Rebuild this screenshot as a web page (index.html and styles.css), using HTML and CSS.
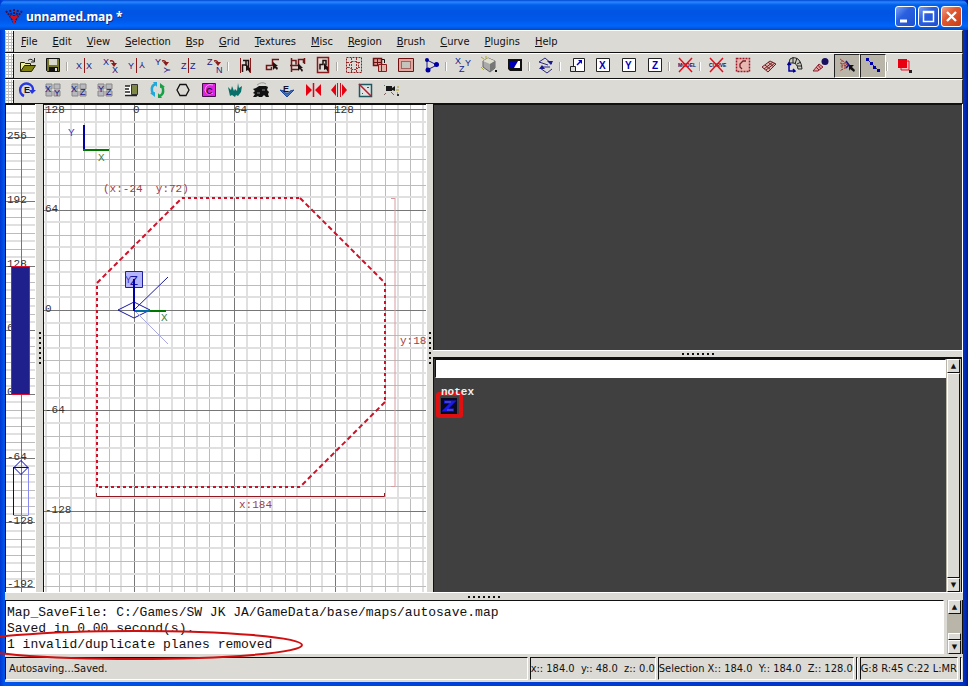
FILE: index.html
```html
<!DOCTYPE html>
<html lang="en">
<head>
<meta charset="utf-8">
<title>unnamed.map *</title>
<link rel="stylesheet" href="styles.css">
</head>
<body>
<div class="window">
  <header class="titlebar">
    <svg class="app-icon" width="18" height="18" viewBox="0 0 18 18"><path d="M1 3l4 5 4 7 4-7 4-5M5 2l2 6M13 2l-2 6M9 1v13" fill="none" stroke="#401040" stroke-width="2" stroke-dasharray="2 1"/><path d="M5 8h8l-3 4v4H8v-4z" fill="#d01020"/></svg>
    <h1>unnamed.map *</h1>
    <div class="window-buttons">
      <button aria-label="Minimize"><svg width="19" height="19"><path d="M4 14h7" stroke="#fff" stroke-width="3"/></svg></button>
      <button aria-label="Maximize"><svg width="19" height="19"><path d="M4.500 14.500v-10h10v10zM4 5.500h11" fill="none" stroke="#fff" stroke-width="1.500"/></svg></button>
      <button class="close" aria-label="Close"><svg width="19" height="19"><path d="M5 5l9 9M14 5l-9 9" stroke="#fff" stroke-width="2.300"/></svg></button>
    </div>
  </header>

  <nav class="bar menubar">
    <span class="grip"></span>
    <button><u>F</u>ile</button><button><u>E</u>dit</button><button><u>V</u>iew</button><button><u>S</u>election</button><button><u>B</u>sp</button><button><u>G</u>rid</button><button><u>T</u>extures</button><button><u>M</u>isc</button><button><u>R</u>egion</button><button><u>B</u>rush</button><button><u>C</u>urve</button><button><u>P</u>lugins</button><button><u>H</u>elp</button>
  </nav>

  <div class="bar toolbar">
    <span class="grip"></span>
    <button aria-label="Open"><svg viewBox="0 0 24 24"><path d="M5.500 18V9.500h4l1 1h5V13" fill="#f0f090" stroke="#222200"/><path d="M5.500 18.500l4-6h11l-4 6z" fill="#808010" stroke="#222200"/><path d="M13 7.500q3-3 6 1M19.500 5v4H16" fill="none" stroke="#222"/></svg></button>
    <button aria-label="Save"><svg viewBox="0 0 24 24"><path d="M5.500 5.500h13v13h-12l-1-1z" fill="#77772a" stroke="#111"/><path d="M8 6h8v6H8z" fill="#d8d8cc"/><path d="M8 14h9v4H8z" fill="#111"/><path d="M14 15h2v3h-2z" fill="#ddd"/></svg></button>
    <i class="sep"></i>
    <button aria-label="Flip X"><svg viewBox="0 0 24 24"><text x="4" y="16" class="ax">X</text><path d="M12.500 5v15" stroke="#8b1a1a"/><text x="14" y="16" class="ax">X</text></svg></button>
    <button aria-label="Rotate X"><svg viewBox="0 0 24 24"><text x="5" y="12" class="ax">X</text><text x="14" y="20" class="ax">X</text><path d="M12 8q4-1 4 3" fill="none" stroke="#8b1a1a" stroke-width="1.500"/><path d="M13 10h6l-3 4z" fill="#8b1a1a"/></svg></button>
    <button aria-label="Flip Y"><svg viewBox="0 0 24 24"><text x="4" y="16" class="ax">Y</text><path d="M12.500 5v15" stroke="#8b1a1a"/><text x="-21" y="-9" class="ax" transform="rotate(180)">Y</text></svg></button>
    <button aria-label="Rotate Y"><svg viewBox="0 0 24 24"><text x="5" y="12" class="ax">Y</text><text x="-20" y="20" class="ax" transform="rotate(-90)">Y</text><path d="M12 8q4-1 4 3" fill="none" stroke="#8b1a1a" stroke-width="1.500"/><path d="M13 9h6l-3 4z" fill="#8b1a1a"/></svg></button>
    <button aria-label="Flip Z"><svg viewBox="0 0 24 24"><text x="5" y="16" class="ax">Z</text><path d="M12.500 5v15" stroke="#8b1a1a"/><text x="14" y="16" class="ax">Z</text></svg></button>
    <button aria-label="Rotate Z"><svg viewBox="0 0 24 24"><text x="5" y="12" class="ax">Z</text><text x="14" y="20" class="ax">N</text><path d="M12 8q4-1 4 3" fill="none" stroke="#8b1a1a" stroke-width="1.500"/><path d="M13 9h6l-3 4z" fill="#8b1a1a"/></svg></button>
    <i class="sep"></i>
    <button aria-label="Complete tall"><svg viewBox="0 0 24 24"><path d="M7.500 5v15M17.500 5v15" stroke="#8b1a1a"/><path d="M9.500 19v-7h4M10 7.500h5.500V14M13 8v5" fill="none" stroke="#201010" stroke-width="1.500"/><path d="M13 11v7l2-1 2 3v-5z" fill="#201010"/></svg></button>
    <button aria-label="Select touching"><svg viewBox="0 0 24 24"><path d="M20 6.500h-6.500v6H7.500v4h5V14" fill="none" stroke="#701818" stroke-width="1.500"/><path d="M14 9v8l2-2 2 2 1-2-2-2h2z" fill="#201010"/></svg></button>
    <button aria-label="Select partial tall"><svg viewBox="0 0 24 24"><path d="M6.500 5v14M19.500 5v6M5 12.500h8M7 7.500h4v4M13.500 12V6.500h5V10M7 16.500h6" fill="none" stroke="#701818" stroke-width="1.500"/><path d="M13 10v8l2-2 2 3 1-2-2-2h2z" fill="#201010"/></svg></button>
    <button aria-label="Select inside"><svg viewBox="0 0 24 24"><path d="M6.500 4.500h11v15h-11z" fill="none" stroke="#8b1a1a" stroke-width="1.500"/><path d="M9 16.500v-5h3v-4h3V12" fill="none" stroke="#201010" stroke-width="1.500"/><path d="M13 10v7l2-1 2 3v-5z" fill="#201010"/></svg></button>
    <i class="sep"></i>
    <button aria-label="CSG subtract"><svg viewBox="0 0 24 24"><path d="M4.500 4.500h15v15h-15z" fill="none" stroke="#8b1a1a" stroke-dasharray="2 1"/><path d="M9.500 8.500h5l2 2v4l-2 2h-5l-2-2v-4zM9.500 5v14M14.500 5v14M5 9.500h3M16 9.500h3M5 14.500h3M16 14.500h3" fill="none" stroke="#9b3030" stroke-dasharray="2 1"/></svg></button>
    <button aria-label="CSG merge"><svg viewBox="0 0 24 24"><path d="M5.500 5.500h8v7h-8z" fill="#d89a90" stroke="#701010" stroke-width="1.500"/><path d="M6 9.500h7M9.500 6v6" fill="none" stroke="#701010"/><path d="M14 6.500h2.500V10" fill="none" stroke="#111"/><path d="M10.500 11.500h8v7h-8z" fill="#dcb4ac" stroke="#8b1a1a"/><path d="M13.500 12v6" stroke="#8b1a1a"/></svg></button>
    <button aria-label="Hollow"><svg viewBox="0 0 24 24"><path d="M4.500 5.500h15v13h-15z" fill="#e0a8a0" stroke="#701010"/><path d="M7.500 8.500h9v7h-9z" fill="#c4c4bc" stroke="#701010" stroke-dasharray="1 1"/></svg></button>
    <button aria-label="Clipper"><svg viewBox="0 0 24 24"><path d="M7 7v10l10-5-10-5" fill="none" stroke="#1a1a90"/><circle cx="7" cy="7" r="2" fill="#0000a0"/><circle cx="8" cy="17" r="2.500" fill="#0000a0"/><circle cx="16.500" cy="11.500" r="2.500" fill="#0000a0"/></svg></button>
    <i class="sep"></i>
    <button aria-label="Change views"><svg viewBox="0 0 24 24"><text x="4" y="11" class="ax">X</text><text x="14" y="13" class="ax">Y</text><text x="8" y="19" class="ax">Z</text></svg></button>
    <button aria-label="Texture view mode"><svg viewBox="0 0 24 24"><path d="M6 8l5-3 7 3v7l-5 4-7-5z" fill="#aaa" stroke="#666"/><path d="M6 8l7 3 5-3-7-3z" fill="#e0e0d0"/><path d="M13 11v8l5-4V8z" fill="#777"/><path d="M4 4l3 2M9 3v3M4 14l3 3" stroke="#b0a830"/><path d="M18 17h2v2h-2z" fill="#111"/></svg></button>
    <button aria-label="Camera view"><svg viewBox="0 0 24 24"><path d="M5 6h14v12H7l-2-2z" fill="#111"/><path d="M7 8h10v7H7z" fill="#fff"/><path d="M7 8h8l-4 7H7z" fill="#0000b8"/></svg></button>
    <i class="sep"></i>
    <button aria-label="Cubic clip"><svg viewBox="0 0 24 24"><path d="M5 9l6-4 7 6M6 15l7 5 5-4M5 9l9 3M8 14h8" fill="none" stroke="#2a2a80"/><path d="M13 8h6l-2 4zM5 16l3-4 3 4z" fill="#1a1a90"/></svg></button>
    <i class="sep"></i>
    <button aria-label="Scale"><svg viewBox="0 0 24 24"><path d="M8.500 5.500h11v13h-11z" fill="#fff" stroke="#222"/><path d="M5.500 13.500h5v5h-5z" fill="#ddd" stroke="#222"/><path d="M12 12l4-4" stroke="#0000c0" stroke-width="1.500"/><path d="M13 7h4v4z" fill="#0000c0"/></svg></button>
    <button aria-label="Scale X"><svg viewBox="0 0 24 24"><path d="M5.500 5.500h13v13h-13z" fill="#fff" stroke="#222"/><text x="8" y="16" class="bx">X</text></svg></button>
    <button aria-label="Scale Y"><svg viewBox="0 0 24 24"><path d="M5.500 5.500h13v13h-13z" fill="#fff" stroke="#222"/><text x="8" y="16" class="bx">Y</text></svg></button>
    <button aria-label="Scale Z"><svg viewBox="0 0 24 24"><path d="M5.500 5.500h13v13h-13z" fill="#fff" stroke="#222"/><text x="9" y="16" class="bx">Z</text></svg></button>
    <i class="sep"></i>
    <button aria-label="Do not select models"><svg viewBox="0 0 24 24"><text x="4" y="14" class="word" fill="#101060">MODEL</text><path d="M5 5l13 14M18 5L5 19" stroke="#e01020" stroke-width="1.500"/></svg></button>
    <i class="sep"></i>
    <button aria-label="Do not select curves"><svg viewBox="0 0 24 24"><text x="4" y="14" class="word" fill="#101060">CURVE</text><path d="M5 5l13 14M18 5L5 19" stroke="#e01020" stroke-width="1.500"/></svg></button>
    <button aria-label="Show patch bounding box"><svg viewBox="0 0 24 24"><path d="M5.500 5.500h13v13h-13z" fill="#e8b8b0" stroke="#a01828" stroke-width="1.500" stroke-dasharray="2 1"/><path d="M15 8h-3l-3 3v3l2 2" fill="none" stroke="#702028" stroke-width="1.300"/></svg></button>
    <button aria-label="Show patch wireframe"><svg viewBox="0 0 24 24"><path d="M5 14l8-6 6 3-8 8zM8 12l6 5M11 9l6 5M7 16l9-7M9 17l9-7" fill="#e0b8b0" stroke="#702028"/></svg></button>
    <button aria-label="Patch bend mode"><svg viewBox="0 0 24 24"><path d="M7 6q5-3 9 1 3 4 3 9h-4q-1-6-5-6H6z" fill="#c8c8c0" stroke="#222"/><path d="M10 4v6M14 5l-2 6M18 9l-4 2M19 13h-5" stroke="#222"/><path d="M6 10v8h6M4.500 12L6 10l2 2M10 16l2 2-2 1" fill="none" stroke="#00009a" stroke-width="1.500"/></svg></button>
    <button aria-label="Redisperse"><svg viewBox="0 0 24 24"><path d="M4 18l6-7 4 3-5 4z" fill="#e0a0a0" stroke="#902030"/><path d="M7 14l3 3M9 12l3 4" stroke="#902030"/><circle cx="16" cy="8.500" r="3.500" fill="#1a1060"/></svg></button>
    <button class="on" aria-label="Patch drill down"><svg viewBox="0 0 24 24"><path d="M5 6l9 6-9 6M5 10l9 2-9 1M7 7v10M10 9v7" fill="none" stroke="#a03830" stroke-dasharray="2 1"/><path d="M11 8l3 4-3 3" fill="none" stroke="#1a1090" stroke-width="1.500"/><path d="M14 12h5l-2 2 3 3-1 2-4-3-1 2z" fill="#111"/></svg></button>
    <button class="on" aria-label="Linear selection"><svg viewBox="0 0 24 24"><path d="M6 6l12 12" stroke="#333"/><path d="M5 5h3v3H5zM9 9h3v3H9zM12 13h3v3h-3zM16 16h3v3h-3z" fill="#0000b0"/></svg></button>
    <i class="sep"></i>
    <button aria-label="Entity color"><svg viewBox="0 0 24 24"><path d="M9 8h8v9H9z" fill="#f8c0c0" stroke="#e01020"/><path d="M6 6h9v9H6z" fill="#e80010"/><path d="M17 17h3v3h-3z" fill="#222"/></svg></button>
  </div>

  <div class="bar toolbar">
    <span class="grip"></span>
    <button aria-label="Refresh entities"><svg viewBox="0 0 24 24"><path d="M9 18A6.500 6.500 0 1 1 18 13" fill="none" stroke="#2838e0" stroke-width="2.500"/><path d="M14 12h7l-4 4z" fill="#2838e0"/><text x="9" y="15" class="bx small">E</text></svg></button>
    <button aria-label="View XY"><svg viewBox="0 0 24 24"><path d="M5 6h6v5H5zM13 6h6v5h-6zM5 13h6v5H5zM13 13h6v5h-6z" fill="#b8b8c0" stroke="#888"/><text x="4" y="14" class="ax">X</text><text x="13" y="18" class="ax">Y</text></svg></button>
    <button aria-label="View XZ"><svg viewBox="0 0 24 24"><path d="M5 6h6v5H5zM13 6h6v5h-6zM5 13h6v5H5zM13 13h6v5h-6z" fill="#b8b8c0" stroke="#888"/><text x="4" y="14" class="ax">X</text><text x="13" y="17" class="ax">Z</text></svg></button>
    <button aria-label="View YZ"><svg viewBox="0 0 24 24"><path d="M5 6h6v5H5zM13 6h6v5h-6zM5 13h6v5H5zM13 13h6v5h-6z" fill="#b8b8c0" stroke="#888"/><text x="5" y="14" class="ax">Y</text><text x="13" y="17" class="ax">Z</text></svg></button>
    <button aria-label="Texture browser"><svg viewBox="0 0 24 24"><path d="M6 8h6v9H6z" fill="#fff"/><path d="M6 8h5M6 11h4M6 14h5M6 17.500h12" stroke="#222" stroke-width="1.500"/><path d="M12.500 6.500h6v10h-6z" fill="#808848" stroke="#333"/></svg></button>
    <button aria-label="Refresh models"><svg viewBox="0 0 24 24"><path d="M11 6q-5 1-4 7l1 3" fill="none" stroke="#20a8d8" stroke-width="2.500"/><path d="M8 4h4v5zM5 15l5 4V14z" fill="#20a8d8"/><path d="M14 18q5-1 4-7l-1-3" fill="none" stroke="#18a048" stroke-width="2.500"/><path d="M17 20h-4v-5zM20 9l-5-4v5z" fill="#18a048"/></svg></button>
    <button aria-label="Background"><svg viewBox="0 0 24 24"><path d="M9 6.500h6l3 5.500-3 5.500H9L6 12z" fill="none" stroke="#111" stroke-width="1.300"/></svg></button>
    <button aria-label="Caulk"><svg viewBox="0 0 24 24"><path d="M5.500 5.500h13v13h-13z" fill="#e020e0" stroke="#401048"/><path d="M16 7q-7-2-8 5 1 6 8 3" fill="none" stroke="#f8a0ff"/><text x="9" y="16" class="bx small">C</text></svg></button>
    <button aria-label="Tree planter"><svg viewBox="0 0 24 24"><path d="M5 9l3 3 1-4 2 5 1-2 2 2 1-8 1 5 3-2-1 6-3 4-2-1-1 2-3-2-2 1z" fill="#087068"/></svg></button>
    <button aria-label="Train"><svg viewBox="0 0 24 24"><path d="M8 7q5-4 9-1" fill="none" stroke="#999"/><path d="M4 11l3-1 3-2h7l2 1-1 3 2 2-1 2 1 3h-3l-2-2-2 2h-3l-1-1-2 1H4l2-3-2-1 2-2z" fill="#111"/><path d="M8 15h3M13 12h3" stroke="#888"/></svg></button>
    <button aria-label="Drop entity"><svg viewBox="0 0 24 24"><path d="M5 12l7 7 7-7-4 1-1 2h-4l-1-2z" fill="#4070b8" stroke="#204898"/><text x="8" y="14" class="bx small">E</text></svg></button>
    <button aria-label="Merge points"><svg viewBox="0 0 24 24"><path d="M12.500 5v14" stroke="#e00018" stroke-width="1.500"/><path d="M5 6l6 6-6 6zM20 6l-6 6 6 6z" fill="#e80010"/></svg></button>
    <button aria-label="Split points"><svg viewBox="0 0 24 24"><path d="M10.500 5v14M13.500 5v14" stroke="#d01020"/><path d="M9 6v12l-5-6zM15 6v12l5-6z" fill="#e80010"/></svg></button>
    <button aria-label="Path tool"><svg viewBox="0 0 24 24"><path d="M6.500 6.500h12v12h-12z" fill="#dce4e4" stroke="#205860" stroke-width="1.500"/><path d="M6 6l12 12" stroke="#c01828" stroke-width="1.500"/><path d="M9 15h1v1H9zM14 9h2v1h-2zM9 9h1v1H9z" fill="#205860"/></svg></button>
    <button aria-label="Camera"><svg viewBox="0 0 24 24"><path d="M7 8h6v5H7zM13 10l3-2v5l-3-1z" fill="#181818"/><path d="M6 8l-1-1M7 15l-2 2M12 14l3 3M18 15h1" stroke="#806060"/><path d="M18 16h2v2h-2z" fill="#333"/><path d="M17 12h3M18 9h2" stroke="#a8a020"/></svg></button>
  </div>

  <main class="workspace">
    <section class="view zview" aria-label="Z view">
      <svg id="z-view">
        <g class="grid" data-kind="z"></g>
        <g class="coord"><text x="1" y="34">256</text><text x="1" y="98">192</text><text x="1" y="162">128</text><text x="1" y="226">64</text><text x="1" y="290">0</text><text x="1" y="355">-64</text><text x="1" y="419">-128</text><text x="1" y="482">-192</text></g>
        <path d="M5.500 161.500h18v128h-18z" fill="#20208c" stroke="#e01030"/>
        <path d="M7.500 362v48M22.500 362v48M7.500 410.500h15" fill="none" stroke="#8888f0"/>
        <path d="M7.500 362v48M8 362.500l7-7 7 7-7 7zM8 362.500h14" fill="none" stroke="#0000b0"/>
      </svg>
    </section>
    <div class="split vertical"></div>
    <section class="view" aria-label="XY top view">
      <svg id="xy-view">
        <g class="grid" data-kind="xy"></g>
        <g class="coord"><text x="1" y="8">128</text><text x="89" y="8">0</text><text x="190" y="8">64</text><text x="290" y="8">128</text><text x="1" y="107">64</text><text x="1" y="207">0</text><text x="1" y="308">-64</text><text x="1" y="408">-128</text></g>
        <path d="M40 20v26" stroke="#0000a8" stroke-width="2"/><path d="M39 45h26" stroke="#007800" stroke-width="2"/>
        <text x="24" y="31" class="axis-y">Y</text><text x="54" y="56" class="axis-x">X</text>
        <text x="59" y="87" class="dim">(x:-24&#160; y:72)</text>
        <path class="brush" d="M53 382V178M138 93h118M341 178v119M256 382H53"/>
        <path class="brush slope" d="M53 178l85-85M256 93l85 85M341 297l-85 85"/>
        <path d="M52.500 388v3.500h288V388" fill="none" stroke="#901820"/>
        <text x="195" y="403" class="dim">x:184</text>
        <path d="M347 93.500h4M347 381.500h4M351 93v288" fill="none" stroke="#d89aa0"/>
        <text x="356" y="239" class="dim">y:184</text>
        <path d="M81.500 166.500h17v16h-17z" fill="#b4b4fa" stroke="#20209c"/>
        <text x="81" y="178" class="axis-y">Y</text><text x="86" y="180" class="camera-z">Z</text>
        <path d="M90 205l34-33M74 205l16-8 16 8-16 8z" fill="none" stroke="#1818a0"/>
        <path d="M90 205l34 34" stroke="#a8a8e8"/><path d="M106 206h16" stroke="#007800" stroke-width="2"/><path d="M90 206h16" stroke="#0070a0" stroke-width="2"/><path d="M90 206v-32" stroke="#0000a8" stroke-width="2"/>
        <text x="117" y="216" class="axis-x">X</text>
      </svg>
    </section>
    <div class="split vertical"></div>
    <div class="side">
      <section class="view camera" aria-label="Camera"></section>
      <div class="split horizontal"></div>
      <section class="view textures" aria-label="Textures">
        <div class="texture-list">
          <input type="text" aria-label="Texture filter">
          <figure class="texture">
            <figcaption>notex</figcaption>
            <svg width="16" height="16" viewBox="0 0 16 16"><path d="M0 0h16v16H0z" fill="#080820"/><path d="M3 4h9l-8 8h9" fill="none" stroke="#1818f0" stroke-width="3"/><path d="M4 4h6M6 12h6" stroke="#6868b0"/></svg>
            <span class="mark"></span>
          </figure>
        </div>
        <div class="scroll"><button aria-label="Scroll textures up">▲</button><i class="thumb"></i><button aria-label="Scroll textures down">▼</button></div>
      </section>
    </div>
  </main>

  <div class="split horizontal"></div>

  <section class="console">
    <div class="log"><p>Map_SaveFile: C:/Games/SW JK JA/GameData/base/maps/autosave.map</p><p>Saved in 0.00 second(s).</p><p>1 invalid/duplicate planes removed</p></div>
    <div class="scroll"><button aria-label="Scroll console up">▲</button><i class="trough"></i><i class="thumb small"></i><button aria-label="Scroll console down">▼</button></div>
    <svg class="ring" width="312" height="34" viewBox="0 0 312 34"><ellipse cx="135" cy="17" rx="167" ry="14" fill="none" stroke="#d01010" stroke-width="2"/></svg>
  </section>

  <footer class="status">
    <span class="wide">Autosaving...Saved.</span><span>x:: 184.0&#160; y:: 48.0&#160; z:: 0.0</span><span>Selection X:: 184.0&#160; Y:: 184.0&#160; Z:: 128.0</span><span class="empty"></span><span>G:8 R:45 C:22 L:MR</span><span class="empty"></span>
  </footer>
</div>
<script src="grid.js"></script>
</body>
</html>
```
FILE: styles.css
```css
* { box-sizing: border-box; }
body { margin: 0; background: #0a1a80; font: 11px/14px "DejaVu Sans Condensed", "Liberation Sans", sans-serif; color: #111; }
button { margin: 0; padding: 0; border: 0; background: none; font: inherit; color: inherit; }
.window { display: flex; flex-direction: column; height: 100vh; padding: 0 5px 4px; background: linear-gradient(90deg, #0036d0, #0055ea 4px, #0040d8 50%, #0030c0 calc(100% - 4px), #001890); }

.titlebar { display: flex; align-items: center; flex: 0 0 30px; margin: 0 -5px; padding: 3px 6px 0 5px; border-radius: 7px 7px 0 0; background: linear-gradient(#0048d0, #2a86ff 2px, #0060e8 5px, #0054e3 12px, #0058ea 20px, #0066fc 26px, #0048c8); }
.titlebar h1 { flex: 1; margin: 0 0 0 3px; font: bold 12px/18px "Noto Sans", sans-serif; color: #fff; text-shadow: 1px 1px #0a2880; }
.window-buttons { display: flex; gap: 2px; }
.window-buttons button { width: 21px; height: 21px; border: 1px solid #fff; border-radius: 3px; background: linear-gradient(135deg, #7aa0f4, #2a60e0 40%, #1c50d0); }
.window-buttons .close { background: linear-gradient(135deg, #f0a088, #e05830 40%, #c83c18); }
.window-buttons svg { display: block; }

.bar { display: flex; align-items: center; flex: 0 0 25px; border-top: 1px solid #fff; border-bottom: 1px solid #111; border-right: 1px solid #333; background: #dcdad5; }
.menubar { flex-basis: 23px; }
.menubar button { padding: 1px 8px 0 7px; }
.grip { align-self: stretch; width: 9px; border-right: 1px solid #111; background: radial-gradient(circle at 1px 1px, #fff 1px, transparent 1px) 1px 0 / 3px 3px, #c4c2bc; }
.toolbar button { flex: 0 0 26px; height: 23px; display: grid; justify-items: center; align-items: start; }
.toolbar button svg { width: 24px; height: 24px; margin-top: -2px; }
.toolbar .on { height: 24px; background: #b9b5a9; border: 1px solid #fff; border-top-color: #222; border-left-color: #222; }
.sep { flex: 0 0 5px; height: 9px; border-left: 1px solid #aaa8a2; box-shadow: inset 1px 0 #fff; }
.ax { font: 9px "Liberation Sans", sans-serif; fill: #181888; }
.bx { font: bold 10px "Liberation Sans", sans-serif; fill: #0000b8; }
.bx.small { font-size: 9px; fill: #181030; }
.word { font: bold 5px "Liberation Sans", sans-serif; }

.workspace { flex: 1; min-height: 0; display: grid; grid-template-columns: 30px 8px minmax(0, 383fr) 7px minmax(0, 530fr); background: #dcdad5; }
.view { min-width: 0; min-height: 0; overflow: hidden; border-top: 1px solid #111; border-left: 1px solid #111; background: #fff; }
.view > svg { display: block; width: 100%; height: 100%; }
.split { display: grid; place-items: center; background: #dcdad5; }
.split::after { content: ""; }
.split.vertical { border-left: 1px solid #fff; }
.split.vertical::after { width: 2px; height: 32px; background: repeating-linear-gradient(#111 0 2px, transparent 2px 5px); }
.split.horizontal { flex: 0 0 7px; border-top: 1px solid #fff; }
.split.horizontal::after { width: 32px; height: 2px; background: repeating-linear-gradient(90deg, #111 0 2px, transparent 2px 5px); }
.window > .split.horizontal { flex-basis: 8px; }

.grid path { fill: none; shape-rendering: crispEdges; }
.minor { stroke: #bcbcbc; }
.soft { stroke: #e0e0e0; stroke-width: 2px; }
.major { stroke: #777; }
.coord, .dim, .axis-x, .axis-y { font: 11px "Liberation Mono", monospace; }
.coord { fill: #333; }
.dim { fill: #a04048; }
.axis-y { fill: #4040d0; }
.axis-x { fill: #408040; }
.camera-z { font: 13px "Liberation Sans", sans-serif; fill: #1818a0; }
.brush { fill: none; stroke: #d01028; stroke-width: 2px; stroke-dasharray: 3 3; }
.brush.slope { stroke-dasharray: 5 3; }

.side { display: flex; flex-direction: column; min-height: 0; border-right: 1px solid #fff; }
.camera { flex: 247; background: #404040; }
.textures { flex: 235; display: flex; border-top-width: 2px; background: #404040; }
.texture-list { flex: 1; padding-left: 1px; }
.texture-list input { display: block; width: 100%; height: 19px; padding: 0 4px; border: 1px solid #fff; border-top-color: #111; border-left-color: #111; background: #fff; font: inherit; }
.texture { position: relative; width: 40px; margin: 8px 0 0 6px; }
.texture figcaption { position: relative; z-index: 1; font: bold 11px/12px "Liberation Mono", monospace; color: #f0f0f0; }
.texture svg { display: block; }
.mark { position: absolute; left: -5px; top: 6px; width: 27px; height: 26px; border: 4px solid #e01010; border-radius: 3px; }

.scroll { display: flex; flex-direction: column; flex: 0 0 16px; padding: 0 1px; border-right: 1px solid #111; background: #b9b5a9; }
.scroll button { flex: 0 0 14px; font: 7px/10px "DejaVu Sans", sans-serif; }
.scroll button, .thumb { border: 1px solid #fff; border-right-color: #111; border-bottom-color: #111; background: #dcdad5; }
.thumb, .trough { flex: 1; }
.thumb.small { flex: 0 0 7px; }

.console { position: relative; display: flex; flex: 0 0 54px; background: #dcdad5; }
.log { flex: 1; margin-right: 3px; padding: 4px 0 0 1px; border: 1px solid #fff; border-top-color: #111; border-left-color: #111; background: #fff; font: 13px/16px "Liberation Mono", monospace; white-space: pre; overflow: hidden; }
.log p { margin: 0; }
.ring { position: absolute; left: -5px; top: 28px; z-index: 1; }

.status { display: flex; gap: 2px; flex: 0 0 28px; padding: 3px 1px 2px 0; background: #dcdad5; }
.status span { padding: 4px 0 0; border: 1px solid #fff; border-top-color: #111; border-left-color: #111; white-space: pre; }
.status .wide { flex: 1; padding-left: 3px; }
.status .empty { width: 2px; padding: 0; }
```
FILE: grid.js
```js
// Draws the map grid of each view, from the world origin outwards.
const NS = "http://www.w3.org/2000/svg";

function draw(group, cls, d) {
  const path = document.createElementNS(NS, "path");
  path.setAttribute("class", cls);
  path.setAttribute("d", d);
  group.appendChild(path);
}

function lines(group, origin, step, size, make) {
  const paths = { soft: "", minor: "", major: "" };
  for (let k = Math.ceil(-origin / step); origin + k * step < size; k++) {
    const kind = k % 8 === 0 ? "major" : k % 2 === 0 ? "minor" : "soft";
    const at = Math.round(origin + k * step) + (kind === "soft" ? 0 : 0.5);
    paths[kind] += make(at);
  }
  for (const kind in paths) draw(group, kind, paths[kind]);
}

for (const group of document.querySelectorAll(".grid")) {
  const box = group.ownerSVGElement.getBoundingClientRect();
  if (group.dataset.kind === "xy") {
    lines(group, 90, 12.55, box.width, x => `M${x} 0v${box.height}`);
    lines(group, 205, 12.55, box.height, y => `M0 ${y}h${box.width}`);
  } else {
    lines(group, 289, 8.03, box.height, y => `M0 ${y}h${box.width}`);
    draw(group, "major", `M15.5 0v${box.height}`);
  }
}
```
